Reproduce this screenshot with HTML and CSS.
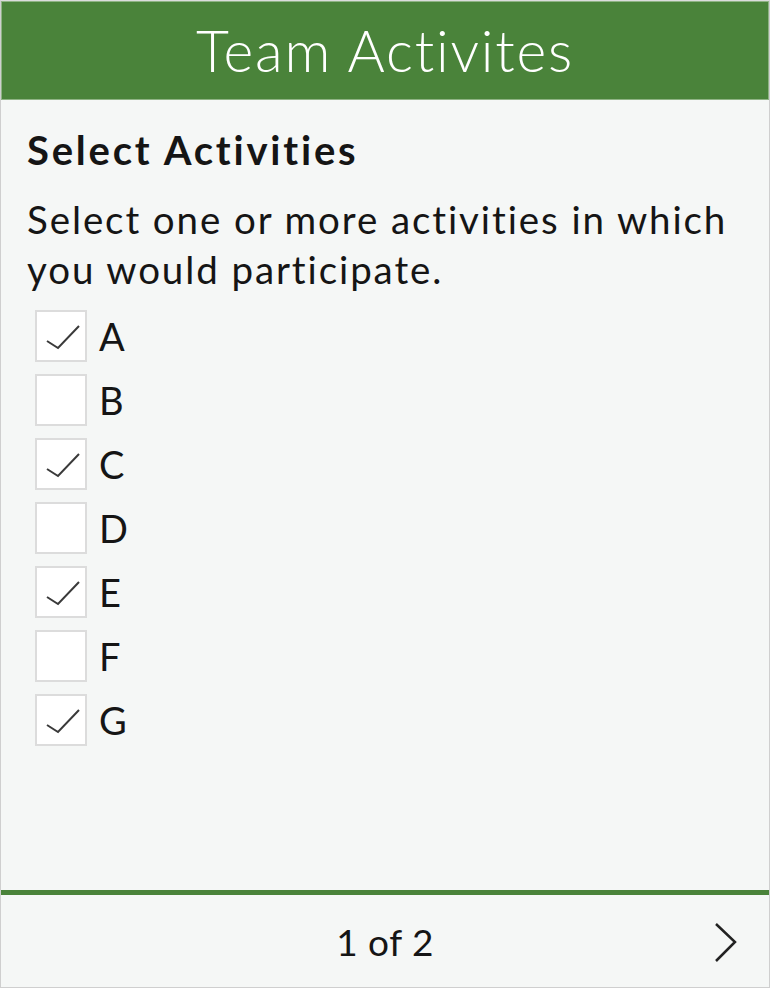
FILE: index.html
```html
<!DOCTYPE html>
<html>
<head>
<meta charset="utf-8">
<link rel="stylesheet" href="styles.css">
</head>
<body>
<div class="card">
  <header class="header">Team Activites</header>
  <main class="content">
    <h2 class="title">Select Activities</h2>
    <p class="desc">Select one or more activities in which you would participate.</p>
    <ul class="options">
      <li class="option"><span class="box checked"><svg viewBox="0 0 52 52" width="52" height="52"><path d="M12 31 L23 38 L44 16" fill="none" stroke="#3a3a3a" stroke-width="2"/></svg></span><span class="label">A</span></li>
      <li class="option"><span class="box"></span><span class="label">B</span></li>
      <li class="option"><span class="box checked"><svg viewBox="0 0 52 52" width="52" height="52"><path d="M12 31 L23 38 L44 16" fill="none" stroke="#3a3a3a" stroke-width="2"/></svg></span><span class="label">C</span></li>
      <li class="option"><span class="box"></span><span class="label">D</span></li>
      <li class="option"><span class="box checked"><svg viewBox="0 0 52 52" width="52" height="52"><path d="M12 31 L23 38 L44 16" fill="none" stroke="#3a3a3a" stroke-width="2"/></svg></span><span class="label">E</span></li>
      <li class="option"><span class="box"></span><span class="label">F</span></li>
      <li class="option"><span class="box checked"><svg viewBox="0 0 52 52" width="52" height="52"><path d="M12 31 L23 38 L44 16" fill="none" stroke="#3a3a3a" stroke-width="2"/></svg></span><span class="label">G</span></li>
    </ul>
  </main>
  <footer class="footer">
    <span class="pager">1 of 2</span>
    <svg class="next" viewBox="0 0 30 44" width="30" height="44"><path d="M4 3 L23 21 L4 40" fill="none" stroke="#222" stroke-width="2.5"/></svg>
  </footer>
</div>
</body>
</html>
```

FILE: styles.css
```css
html, body {
  margin: 0;
  padding: 0;
}
body {
  width: 770px;
  height: 988px;
  font-family: Lato, "Noto Sans", sans-serif;
  font-variant-ligatures: none;
  color: #151515;
}
.card {
  box-sizing: border-box;
  width: 770px;
  height: 988px;
  border: 1px solid #cfcfcf;
  border-top-color: #dcdcdc;
  background: #f5f7f6;
  display: flex;
  flex-direction: column;
}
.header {
  box-sizing: border-box;
  height: 99px;
  border: 1px solid #8fb384;
  background: #4a833a;
  color: #ffffff;
  font-weight: 300;
  font-size: 57px;
  letter-spacing: 1.8px;
  text-align: center;
  line-height: 96px;
}
.content {
  flex: 1;
  padding: 0 26px;
}
.title {
  margin: 24px 0 0;
  font-size: 40px;
  font-weight: 700;
  letter-spacing: 2.8px;
  line-height: 52px;
}
.desc {
  margin: 18px 0 0;
  font-size: 38.5px;
  letter-spacing: 1.9px;
  line-height: 50px;
}
.options {
  list-style: none;
  margin: 16px 0 0;
  padding: 0 0 0 8px;
  display: flex;
  flex-direction: column;
  gap: 12px;
}
.option {
  display: flex;
  align-items: center;
  gap: 12px;
  height: 52px;
}
.box {
  box-sizing: border-box;
  width: 52px;
  height: 52px;
  border: 2px solid #dcdcdc;
  background: #ffffff;
  position: relative;
}
.box svg {
  position: absolute;
  left: -2px;
  top: -2px;
}
.label {
  font-size: 38px;
}
.footer {
  box-sizing: border-box;
  height: 97px;
  border-top: 5px solid #4a833a;
  display: flex;
  align-items: center;
  justify-content: center;
  position: relative;
}
.pager {
  font-size: 37px;
  letter-spacing: 0.5px;
}
.next {
  position: absolute;
  right: 27px;
  top: 26px;
}
```
